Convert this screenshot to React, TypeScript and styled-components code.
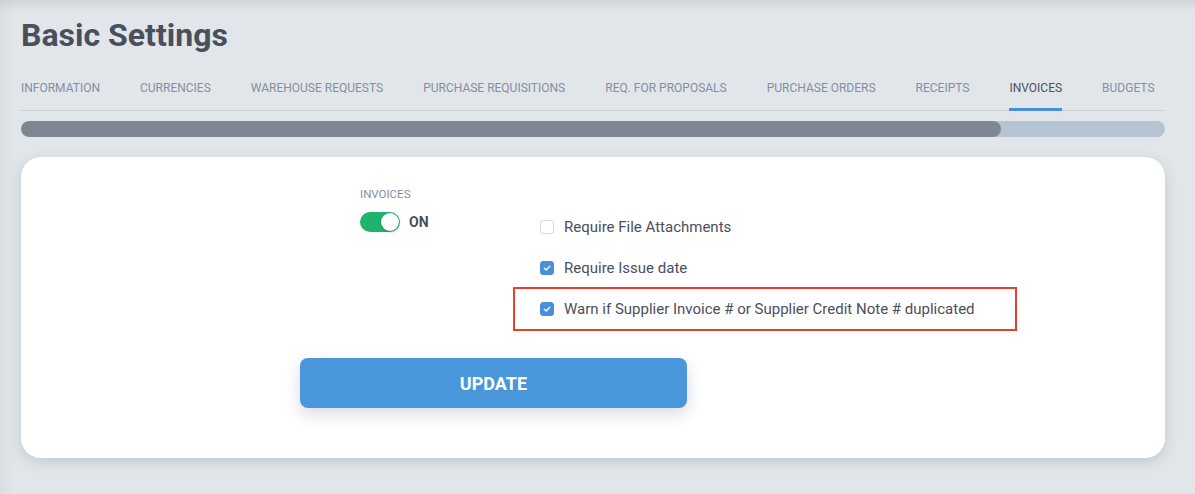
import React, { useState } from "react";
import styled, { createGlobalStyle } from "styled-components";

const textColor = "#4a4f5c";
const mutedColor = "#878ea2";
const blue = "#4a96db";

const GlobalStyle = createGlobalStyle`
  html, body {
    margin: 0;
    padding: 0;
    background: #e1e6ea;
    font-family: Roboto, "Liberation Sans", Arial, sans-serif;
  }
`;

const tabs = [
  "Information",
  "Currencies",
  "Warehouse Requests",
  "Purchase Requisitions",
  "Req. for Proposals",
  "Purchase Orders",
  "Receipts",
  "Invoices",
  "Budgets",
];

const options = [
  { label: "Require File Attachments", checked: false, highlight: false },
  { label: "Require Issue date", checked: true, highlight: false },
  {
    label: "Warn if Supplier Invoice # or Supplier Credit Note # duplicated",
    checked: true,
    highlight: true,
  },
];

const App = () => {
  const [enabled, setEnabled] = useState(true);
  const [checks, setChecks] = useState(options.map((o) => o.checked));
  const progress = 980 / 1144;

  return (
    <>
      <GlobalStyle />
      <Page>
        <Title>Basic Settings</Title>
        <TabBar>
          {tabs.map((t) => (
            <Tab key={t} active={t === "Invoices"}>
              {t}
            </Tab>
          ))}
        </TabBar>
        <Progress>
          <ProgressFill style={{ width: `${progress * 100}%` }} />
        </Progress>
        <Card>
          <FormRow>
            <ToggleColumn>
              <FieldLabel>Invoices</FieldLabel>
              <ToggleRow>
                <Toggle on={enabled} onClick={() => setEnabled(!enabled)}>
                  <Knob />
                </Toggle>
                <ToggleText>{enabled ? "ON" : "OFF"}</ToggleText>
              </ToggleRow>
            </ToggleColumn>
            <OptionList>
              {options.map((o, i) => (
                <Option
                  key={o.label}
                  highlight={o.highlight}
                  onClick={() =>
                    setChecks(checks.map((c, j) => (j === i ? !c : c)))
                  }
                >
                  <Box checked={checks[i]}>
                    {checks[i] && (
                      <svg width="10" height="10" viewBox="0 0 10 10">
                        <path
                          d="M2.3 5.2 L4.2 7 L7.8 3.2"
                          fill="none"
                          stroke="#fff"
                          strokeWidth="1.3"
                          strokeLinecap="round"
                          strokeLinejoin="round"
                        />
                      </svg>
                    )}
                  </Box>
                  <OptionText>{o.label}</OptionText>
                </Option>
              ))}
            </OptionList>
          </FormRow>
          <UpdateButton>Update</UpdateButton>
        </Card>
      </Page>
    </>
  );
};

const Page = styled.div`
  min-height: 494px;
  box-sizing: border-box;
  padding: 16px 30px 0 21px;
  background: linear-gradient(to bottom, rgba(0, 0, 0, 0.07), rgba(0, 0, 0, 0) 12px),
    linear-gradient(to right, rgba(0, 0, 0, 0.03), rgba(0, 0, 0, 0) 16px);
`;

const Title = styled.h1`
  margin: 0;
  font-size: 32px;
  line-height: 38px;
  font-weight: 700;
  color: ${textColor};
`;

const TabBar = styled.div`
  display: flex;
  gap: 40px;
  margin-top: 27px;
  border-bottom: 1px solid #c9ced6;
`;

const Tab = styled.div<{ active?: boolean }>`
  font-size: 12px;
  line-height: 14px;
  text-transform: uppercase;
  color: ${(p) => (p.active ? "#4c5162" : mutedColor)};
  padding-bottom: 13px;
  margin-bottom: -1px;
  border-bottom: 3px solid ${(p) => (p.active ? "#4a90d9" : "transparent")};
  white-space: nowrap;
`;

const Progress = styled.div`
  margin-top: 10px;
  height: 16px;
  border-radius: 8px;
  background: #b6c3d3;
  overflow: hidden;
`;

const ProgressFill = styled.div`
  height: 100%;
  border-radius: 8px;
  background: #7f8892;
`;

const Card = styled.div`
  margin-top: 20px;
  background: #fff;
  border-radius: 20px;
  box-shadow: 0 4px 14px rgba(40, 50, 70, 0.16);
  padding: 30px 0 50px 0;
`;

const FormRow = styled.div`
  display: flex;
  align-items: flex-start;
  padding-left: 339px;
`;

const ToggleColumn = styled.div`
  width: 155px;
  display: flex;
  flex-direction: column;
  gap: 11px;
`;

const FieldLabel = styled.div`
  font-size: 11.5px;
  line-height: 14px;
  text-transform: uppercase;
  color: ${mutedColor};
`;

const ToggleRow = styled.div`
  display: flex;
  align-items: center;
  gap: 9px;
`;

const Toggle = styled.div<{ on: boolean }>`
  width: 40px;
  height: 20px;
  border-radius: 10px;
  background: ${(p) => (p.on ? "#1fb46e" : "#c9ced6")};
  display: flex;
  align-items: center;
  justify-content: ${(p) => (p.on ? "flex-end" : "flex-start")};
  padding: 1px;
  box-sizing: border-box;
  cursor: pointer;
`;

const Knob = styled.div`
  width: 18px;
  height: 18px;
  border-radius: 50%;
  background: #fff;
  box-shadow: 0 1px 3px rgba(0, 0, 0, 0.25);
`;

const ToggleText = styled.span`
  font-size: 14px;
  font-weight: 700;
  color: ${textColor};
`;

const OptionList = styled.div`
  display: flex;
  flex-direction: column;
  gap: 1px;
  margin-top: 20px;
`;

const Option = styled.div<{ highlight?: boolean }>`
  width: 500px;
  height: 40px;
  display: flex;
  align-items: center;
  gap: 10px;
  padding-left: 25px;
  box-sizing: border-box;
  cursor: pointer;
  outline: ${(p) => (p.highlight ? "2px solid #e8402a" : "none")};
`;

const Box = styled.div<{ checked: boolean }>`
  width: 14px;
  height: 14px;
  box-sizing: border-box;
  border-radius: 3px;
  border: 1px solid ${(p) => (p.checked ? "#4a90d9" : "#d3d8df")};
  background: ${(p) => (p.checked ? "#4a90d9" : "#fff")};
  display: flex;
  align-items: center;
  justify-content: center;
`;

const OptionText = styled.span`
  font-size: 15px;
  color: ${textColor};
`;

const UpdateButton = styled.button`
  display: block;
  margin: 29px 0 0 279px;
  width: 387px;
  height: 50px;
  border: none;
  border-radius: 8px;
  background: ${blue};
  color: #fff;
  font-family: Roboto, "Liberation Sans", Arial, sans-serif;
  font-size: 18px;
  font-weight: 700;
  text-transform: uppercase;
  box-shadow: 0 6px 16px rgba(40, 50, 70, 0.18);
  cursor: pointer;
`;

export default App;
